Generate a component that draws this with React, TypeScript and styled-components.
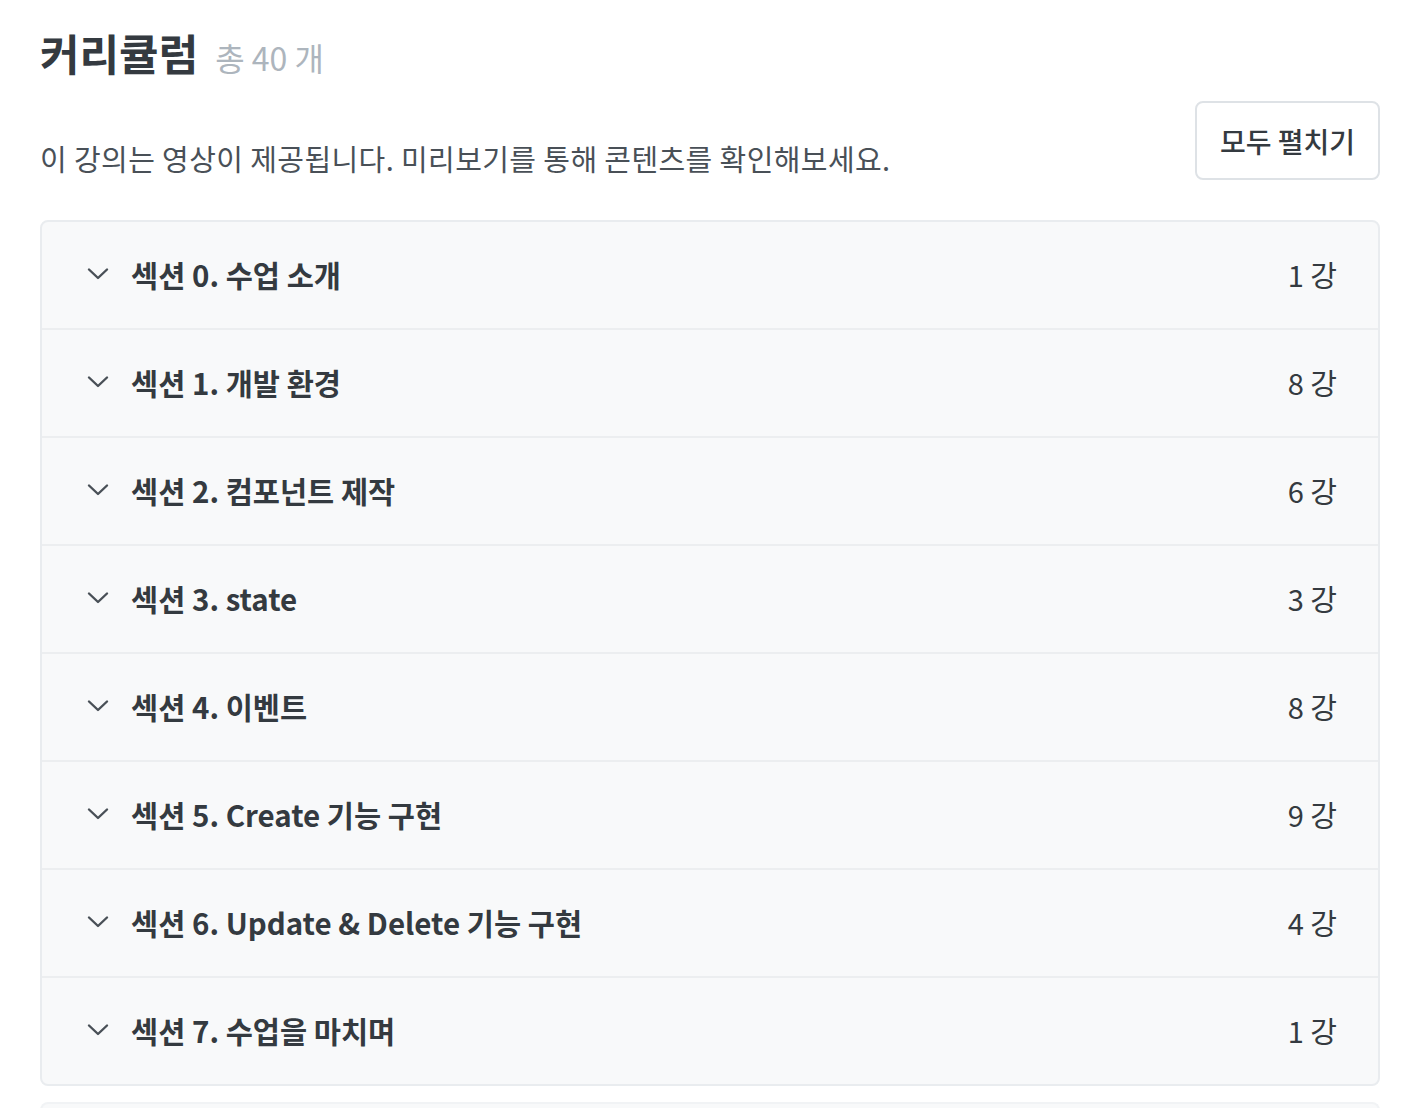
import React from "react";
import styled, { createGlobalStyle } from "styled-components";

const Global = createGlobalStyle`
  html, body { margin: 0; padding: 0; background: #ffffff; }
  body { font-family: "Noto Sans CJK KR", "Noto Sans", sans-serif; color: #343a40; }
  * { box-sizing: border-box; }
`;

const Page = styled.div`
  width: 1408px;
  padding: 22px 28px 0 40px;
`;

const TitleRow = styled.div`
  display: flex;
  align-items: baseline;
  gap: 17px;
  height: 60px;
`;

const Title = styled.h2`
  margin: 0;
  font-size: 43px;
  font-weight: 700;
  line-height: 60px;
  color: #343a40;
`;

const Count = styled.span`
  font-size: 32px;
  font-weight: 400;
  color: #adb5bd;
`;

const InfoRow = styled.div`
  display: flex;
  justify-content: space-between;
  align-items: flex-end;
  margin-top: 19px;
`;

const Description = styled.p`
  margin: 0 0 2px;
  font-size: 29px;
  letter-spacing: 0.4px;
  line-height: 40px;
  color: #495057;
  font-weight: 400;
`;

const ExpandButton = styled.button`
  width: 185px;
  height: 79px;
  border: 2px solid #dee2e6;
  border-radius: 8px;
  background: #ffffff;
  font-family: inherit;
  font-size: 28px;
  font-weight: 500;
  color: #343a40;
  cursor: pointer;
  padding: 0;
`;

const Card = styled.div`
  margin-top: 40px;
  border: 2px solid #e9ecef;
  border-radius: 8px;
  background: #f8f9fa;
  overflow: hidden;
`;

const Row = styled.div<{ $last?: boolean }>`
  display: flex;
  align-items: center;
  height: ${(p) => (p.$last ? "106px" : "108px")};
  padding: 0 41px 2px 44px;
  border-bottom: ${(p) => (p.$last ? "none" : "2px solid #eceef0")};
`;

const Chevron = styled.svg`
  width: 24px;
  height: 24px;
  flex: none;
  margin-right: 21px;
`;

const SectionTitle = styled.span`
  flex: 1;
  font-size: 29.5px;
  font-weight: 700;
  color: #343a40;
`;

const Lectures = styled.span`
  font-size: 29px;
  font-weight: 400;
  color: #343a40;
`;

const NextBox = styled.div`
  margin-top: 16px;
  height: 20px;
  border-radius: 8px 8px 0 0;
  background: #f8f9fa;
  border: 2px solid #f1f3f5;
  border-bottom: none;
`;

const sections = [
  { title: "섹션 0. 수업 소개", count: 1 },
  { title: "섹션 1. 개발 환경", count: 8 },
  { title: "섹션 2. 컴포넌트 제작", count: 6 },
  { title: "섹션 3. state", count: 3 },
  { title: "섹션 4. 이벤트", count: 8 },
  { title: "섹션 5. Create 기능 구현", count: 9 },
  { title: "섹션 6. Update & Delete 기능 구현", count: 4 },
  { title: "섹션 7. 수업을 마치며", count: 1 },
];

export default function App() {
  return (
    <>
      <Global />
      <Page>
        <TitleRow>
          <Title>커리큘럼</Title>
          <Count>총 40 개</Count>
        </TitleRow>
        <InfoRow>
          <Description>이 강의는 영상이 제공됩니다. 미리보기를 통해 콘텐츠를 확인해보세요.</Description>
          <ExpandButton>모두 펼치기</ExpandButton>
        </InfoRow>
        <Card>
          {sections.map((s, i) => (
            <Row key={s.title} $last={i === sections.length - 1}>
              <Chevron viewBox="0 0 24 24" fill="none" stroke="#495057" strokeWidth="2.4" strokeLinecap="round" strokeLinejoin="round">
                <path d="M3 7.5 L12 16 L21 7.5" />
              </Chevron>
              <SectionTitle>{s.title}</SectionTitle>
              <Lectures>{s.count} 강</Lectures>
            </Row>
          ))}
        </Card>
        <NextBox />
      </Page>
    </>
  );
}
